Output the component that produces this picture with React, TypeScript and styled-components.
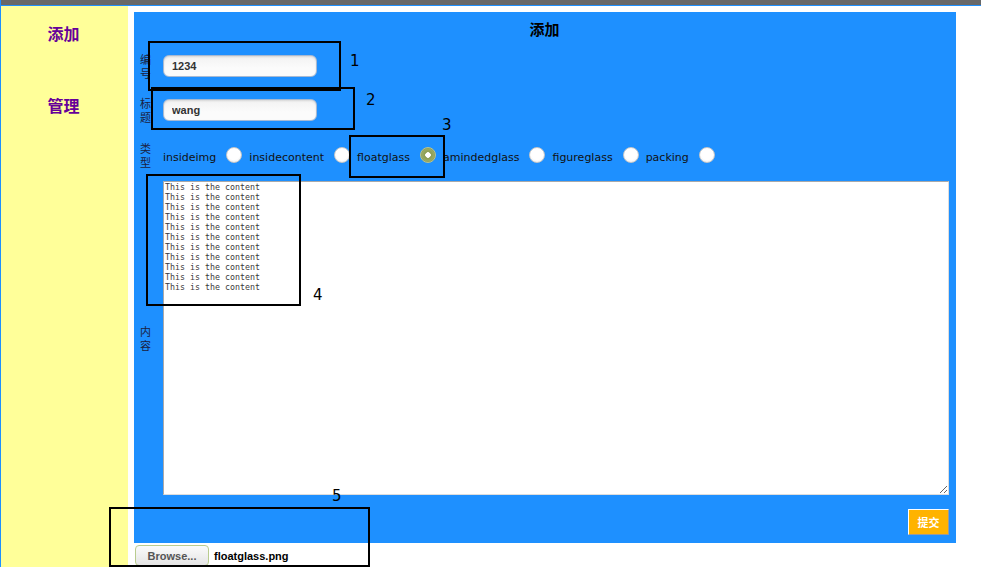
import React from "react";
import styled, { createGlobalStyle } from "styled-components";

const Global = createGlobalStyle`
  html, body { margin: 0; padding: 0; background: #fff; }
  body { font-family: "DejaVu Sans", "Noto Sans CJK SC", sans-serif; overflow: hidden; }
  * { box-sizing: border-box; }
`;

const Page = styled.div`
  position: relative;
  width: 981px;
  height: 567px;
  border-left: 1px solid #1e90ff;
  display: flex;
  flex-direction: column;
  overflow: hidden;
`;

const TopBar = styled.div`
  height: 6px;
  background: #686868;
  border-bottom: 1px solid #1e90ff;
  flex: none;
`;

const Body = styled.div`
  flex: 1;
  display: flex;
`;

const Sidebar = styled.nav`
  width: 127px;
  background: #ffff99;
  display: flex;
  flex-direction: column;
  align-items: center;
  padding-top: 17px;
  gap: 52px;
`;

const NavLink = styled.a`
  font-family: "Noto Sans CJK SC", sans-serif;
  font-size: 16px;
  line-height: 20px;
  font-weight: 700;
  color: #660099;
  text-decoration: none;
  padding-right: 2px;
`;

const Main = styled.main`
  margin-left: 6px;
  width: 822px;
  padding-top: 6px;
  display: flex;
  flex-direction: column;
`;

const Panel = styled.form`
  background: #1e90ff;
  padding: 0 7px 0 6px;
  display: flex;
  flex-direction: column;
`;

const Heading = styled.h2`
  margin: 0;
  height: 32px;
  line-height: 34px;
  text-align: center;
  font-family: "Noto Sans CJK SC", sans-serif;
  font-size: 15px;
  font-weight: 700;
  color: #000;
`;

const FormRow = styled.div<{ $h: number; $top?: number }>`
  display: grid;
  grid-template-columns: 23px 1fr;
  align-items: center;
  height: ${(p) => p.$h}px;
  margin-top: ${(p) => p.$top ?? 0}px;
`;

const Label = styled.label`
  width: 12px;
  font-family: "Noto Sans CJK SC", sans-serif;
  font-size: 11px;
  line-height: 14px;
  color: #1b2140;
`;

const TextInput = styled.input`
  width: 154px;
  height: 22px;
  border: 1px solid #a7b9d2;
  border-radius: 6px;
  background: linear-gradient(#f2f2f2, #fbfbfb 60%);
  box-shadow: inset 0 1px 2px rgba(0, 0, 0, 0.12);
  padding: 0 8px;
  font-family: "Liberation Sans", Arial, sans-serif;
  font-size: 11px;
  font-weight: 700;
  color: #333;
  outline: none;
`;

const RadioGroup = styled.div`
  display: flex;
  align-items: center;
  font-size: 11px;
  color: #111;
`;

const RadioText = styled.span`
  padding-top: 5px;
`;

const Radio = styled.input`
  appearance: none;
  width: 16px;
  height: 16px;
  margin: 0 7px 0 10px;
  border-radius: 50%;
  border: 1px solid #c8c8c8;
  background: radial-gradient(circle at 50% 40%, #fff 55%, #e6e6e6);
  position: relative;
  &:checked {
    background: radial-gradient(circle, #fff 0 2.5px, #8c9c55 3px, #9aaa62 6px, #7d8c4a 8px);
    border-color: #b9c48f;
  }
`;

const TextArea = styled.textarea`
  width: 786px;
  height: 314px;
  border: 1px solid #a9a9a9;
  border-right-color: #ddd;
  border-bottom-color: #ddd;
  background: #fff;
  padding: 0 1px;
  font-family: "DejaVu Sans Mono", monospace;
  font-size: 8.3px;
  line-height: 10px;
  color: #3a3a3a;
  resize: both;
  outline: none;
`;

const SubmitRow = styled.div`
  height: 48px;
  display: flex;
  justify-content: flex-end;
  align-items: flex-start;
  padding-top: 14px;
`;

const SubmitButton = styled.button`
  width: 41px;
  height: 26px;
  background: #ffb300;
  color: #fff;
  border: 1px solid;
  border-color: #fff #9a9a9a #9a9a9a #fff;
  font-family: "Noto Sans CJK SC", sans-serif;
  font-size: 11px;
  font-weight: 700;
  padding: 0;
`;

const FileRow = styled.div`
  margin-top: 2px;
  height: 21px;
  display: flex;
  align-items: center;
  gap: 5px;
  padding-left: 1px;
`;

const BrowseButton = styled.span`
  width: 74px;
  height: 21px;
  border: 1px solid #b9cc8e;
  border-radius: 4px;
  background: linear-gradient(#fbfbfb, #e4e4e4);
  display: flex;
  align-items: center;
  justify-content: center;
  font-family: "Liberation Sans", Arial, sans-serif;
  font-size: 11px;
  font-weight: 700;
  color: #555;
`;

const FileName = styled.span`
  font-family: "Liberation Sans", Arial, sans-serif;
  font-size: 11px;
  font-weight: 700;
  color: #000;
`;

const Mark = styled.div<{ $x: number; $y: number; $w: number; $h: number }>`
  position: absolute;
  left: ${(p) => p.$x}px;
  top: ${(p) => p.$y}px;
  width: ${(p) => p.$w}px;
  height: ${(p) => p.$h}px;
  border: 2px solid #000;
  pointer-events: none;
`;

const MarkNum = styled.span<{ $x: number; $y: number }>`
  position: absolute;
  left: ${(p) => p.$x}px;
  top: ${(p) => p.$y}px;
  font-family: "DejaVu Sans", sans-serif;
  font-size: 15px;
  line-height: 17px;
  color: #000;
`;

const types = ["insideimg", "insidecontent", "floatglass", "amindedglass", "figureglass", "packing"];

const content = Array.from({ length: 11 }, () => "This is the content").join("\n");

export default function App() {
  return (
    <>
      <Global />
      <Page>
        <TopBar />
        <Body>
          <Sidebar>
            <NavLink href="#">添加</NavLink>
            <NavLink href="#">管理</NavLink>
          </Sidebar>
          <Main>
            <Panel onSubmit={(e) => e.preventDefault()}>
              <Heading>添加</Heading>
              <FormRow $h={44}>
                <Label>编号</Label>
                <TextInput defaultValue="1234" />
              </FormRow>
              <FormRow $h={44}>
                <Label>标题</Label>
                <TextInput defaultValue="wang" />
              </FormRow>
              <FormRow $h={46}>
                <Label>类型</Label>
                <RadioGroup>
                  {types.map((t, i) => (
                    <React.Fragment key={t}>
                      <RadioText style={i === 0 ? undefined : undefined}>{t}</RadioText>
                      <Radio type="radio" name="type" defaultChecked={t === "floatglass"} />
                    </React.Fragment>
                  ))}
                </RadioGroup>
              </FormRow>
              <FormRow $h={314} $top={3}>
                <Label>内容</Label>
                <TextArea defaultValue={content} />
              </FormRow>
              <SubmitRow>
                <SubmitButton type="submit">提交</SubmitButton>
              </SubmitRow>
            </Panel>
            <FileRow>
              <BrowseButton>Browse...</BrowseButton>
              <FileName>floatglass.png</FileName>
            </FileRow>
          </Main>
        </Body>

        <Mark $x={147} $y={41} $w={193} $h={50} />
        <MarkNum $x={349} $y={53}>1</MarkNum>
        <Mark $x={150} $y={87} $w={204} $h={43} />
        <MarkNum $x={365} $y={92}>2</MarkNum>
        <Mark $x={348} $y={135} $w={96} $h={43} />
        <MarkNum $x={441} $y={117}>3</MarkNum>
        <Mark $x={145} $y={174} $w={155} $h={132} />
        <MarkNum $x={312} $y={287}>4</MarkNum>
        <Mark $x={108} $y={507} $w={261} $h={60} />
        <MarkNum $x={331} $y={488}>5</MarkNum>
      </Page>
    </>
  );
}
